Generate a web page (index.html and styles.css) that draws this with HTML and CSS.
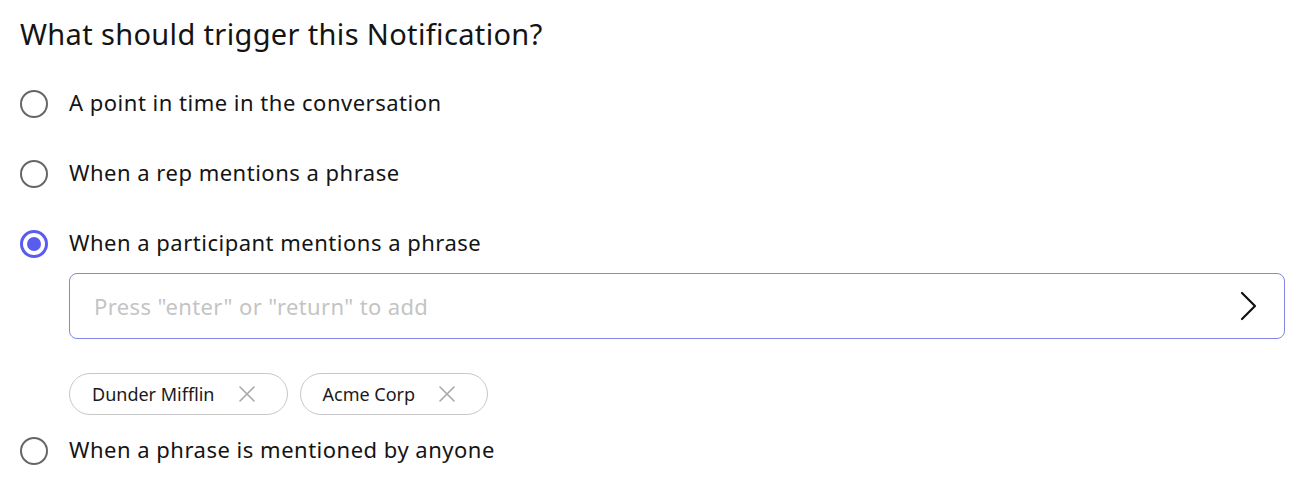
FILE: index.html
```html
<!DOCTYPE html>
<html lang="en">
<head>
<meta charset="utf-8">
<title>Notification trigger</title>
<link rel="stylesheet" href="styles.css">
</head>
<body>
<div class="page">
  <h1 class="title">What should trigger this Notification?</h1>
  <div class="options">
    <label class="option">
      <span class="radio"></span>
      <span class="label">A point in time in the conversation</span>
    </label>
    <label class="option">
      <span class="radio"></span>
      <span class="label">When a rep mentions a phrase</span>
    </label>
    <label class="option">
      <span class="radio radio-on"></span>
      <span class="label">When a participant mentions a phrase</span>
    </label>
    <div class="phrase-box">
      <div class="phrase-input">
        <span class="placeholder">Press "enter" or "return" to add</span>
        <svg class="chevron" width="20" height="32" viewBox="0 0 20 32"><path d="M3 3 L16 16 L3 29" fill="none" stroke="#111" stroke-width="2.2" stroke-linecap="round" stroke-linejoin="round"/></svg>
      </div>
      <div class="chips">
        <span class="chip">Dunder Mifflin<svg class="chip-x" width="18" height="18" viewBox="0 0 18 18"><path d="M2 2 L16 16 M16 2 L2 16" stroke="#a8a8a8" stroke-width="1.6" stroke-linecap="round"/></svg></span>
        <span class="chip">Acme Corp<svg class="chip-x" width="18" height="18" viewBox="0 0 18 18"><path d="M2 2 L16 16 M16 2 L2 16" stroke="#a8a8a8" stroke-width="1.6" stroke-linecap="round"/></svg></span>
      </div>
    </div>
    <label class="option option-last">
      <span class="radio"></span>
      <span class="label">When a phrase is mentioned by anyone</span>
    </label>
  </div>
</div>
</body>
</html>
```

FILE: styles.css
```css
* { box-sizing: border-box; }
html, body { margin: 0; padding: 0; background: #ffffff; }
body {
  font-family: "Noto Sans", "Open Sans", sans-serif;
  color: #1a1a1a;
}
.page {
  padding: 16px 21px 0 20px;
}
.title {
  margin: 0;
  font-size: 29px;
  font-weight: 400;
  line-height: 36px;
  letter-spacing: 0.35px;
  color: #141414;
}
.options {
  display: flex;
  flex-direction: column;
  gap: 30px;
  margin-top: 32px;
}
.option {
  display: flex;
  align-items: center;
  gap: 21px;
  height: 40px;
}
.radio {
  width: 28px;
  height: 28px;
  border-radius: 50%;
  border: 2.5px solid #666666;
  flex: none;
  display: flex;
  align-items: center;
  justify-content: center;
}
.radio-on {
  border: 3px solid #5a5cf0;
}
.radio-on::after {
  content: "";
  width: 14px;
  height: 14px;
  border-radius: 50%;
  background: #5a5cf0;
}
.label {
  font-size: 22px;
  letter-spacing: 0.5px;
  color: #141414;
  position: relative;
  top: -2px;
}
.phrase-box {
  margin-top: -21px;
  margin-left: 49px;
  display: flex;
  flex-direction: column;
  gap: 34px;
}
.phrase-input {
  height: 66px;
  border: 1px solid #8386e3;
  border-radius: 8px;
  display: flex;
  align-items: center;
  justify-content: space-between;
  padding: 0 25px 0 24px;
}
.placeholder {
  font-size: 22px;
  letter-spacing: 0.37px;
  color: #c4c4c4;
}
.chevron { display: block; }
.chips {
  display: flex;
  gap: 12px;
}
.chip {
  display: inline-flex;
  align-items: center;
  height: 42px;
  padding: 0 31px 0 22px;
  border: 1px solid #c8c8c8;
  border-radius: 21px;
  font-size: 18px;
  color: #1a1a1a;
  gap: 23px;
}
.chip-x { display: block; }
.option-last {
  margin-top: -14px;
}
```
